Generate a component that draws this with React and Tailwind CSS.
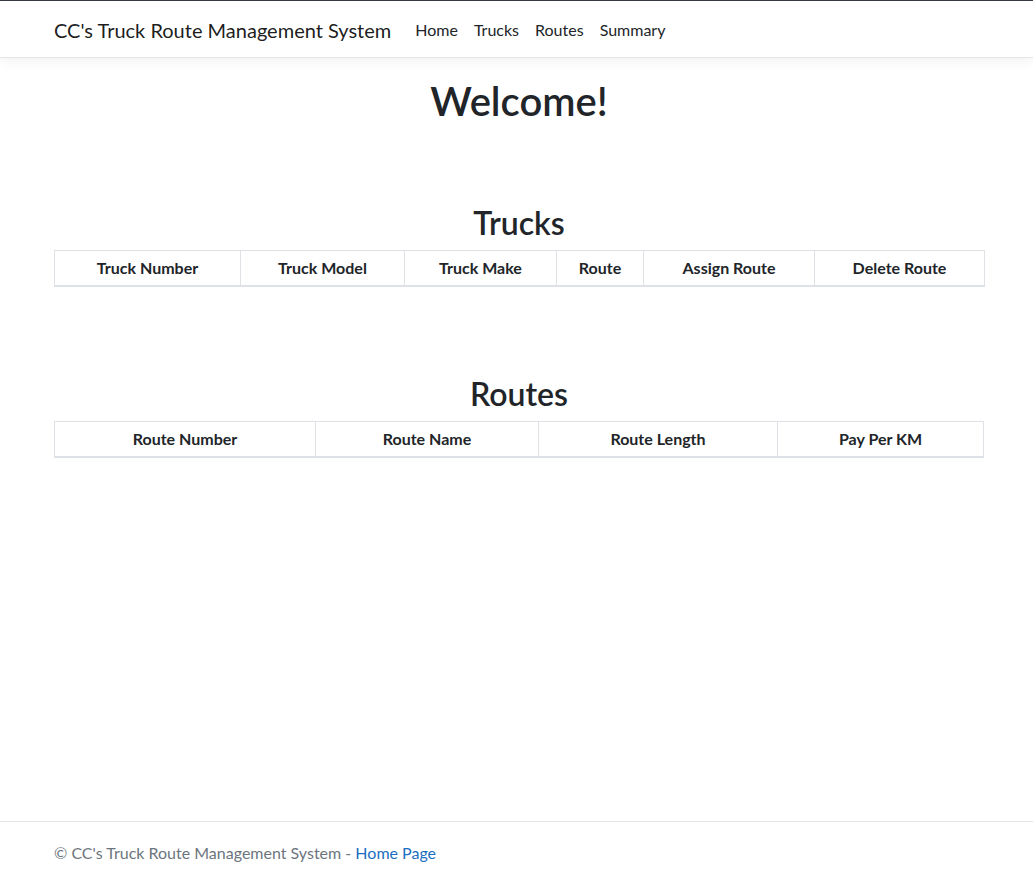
const truckCols = [
  { label: "Truck Number", w: "w-[186px]" },
  { label: "Truck Model", w: "w-[164px]" },
  { label: "Truck Make", w: "w-[152px]" },
  { label: "Route", w: "w-[87px]" },
  { label: "Assign Route", w: "w-[171px]" },
  { label: "Delete Route", w: "w-[170px]" },
];

const routeCols = [
  { label: "Route Number", w: "w-[261px]" },
  { label: "Route Name", w: "w-[223px]" },
  { label: "Route Length", w: "w-[239px]" },
  { label: "Pay Per KM", w: "w-[206px]" },
];

function HeaderTable({ cols }) {
  return (
    <table className="w-[929px] border-collapse table-fixed border border-[#dee2e6]">
      <thead>
        <tr>
          {cols.map((c) => (
            <th
              key={c.label}
              className={`${c.w} border border-[#dee2e6] border-b-2 py-[5px] px-[5px] text-center font-bold leading-6`}
            >
              {c.label}
            </th>
          ))}
        </tr>
      </thead>
    </table>
  );
}

function App() {
  return (
    <div
      className="min-h-screen flex flex-col bg-white text-[#212529] text-base"
      style={{ fontFamily: '"Segoe UI", Lato, "Open Sans", sans-serif' }}
    >
      <header className="border-t border-[#343a40] border-b border-b-[#e5e5e5] bg-white shadow-[0_4px_12px_rgba(0,0,0,0.05)]">
        <nav className="pl-[5px]">
          <div className="mx-auto w-[930px] h-[56px] flex items-center pt-[2px]">
            <a className="text-[20px] leading-[30px] text-[rgba(0,0,0,0.9)] mr-4 whitespace-nowrap">
              CC's Truck Route Management System
            </a>
            <ul className="flex">
              {["Home", "Trucks", "Routes", "Summary"].map((l) => (
                <li key={l}>
                  <a className="block px-2 py-2 text-[#212529] leading-6">{l}</a>
                </li>
              ))}
            </ul>
          </div>
        </nav>
      </header>

      <main className="flex-1 pl-[5px]">
        <div className="mx-auto w-[930px] pt-[19px]">
          <div className="text-center">
            <h1 className="text-[40px] leading-[48px] font-semibold mb-2">Welcome!</h1>
          </div>

          <h2 className="text-center text-[32px] leading-[38px] font-semibold mt-[79px] mb-2">
            Trucks
          </h2>
          <HeaderTable cols={truckCols} />

          <h2 className="text-center text-[32px] leading-[38px] font-semibold mt-[88px] mb-2">
            Routes
          </h2>
          <HeaderTable cols={routeCols} />
        </div>
      </main>

      <footer className="border-t border-[#e5e5e5] h-[56px] pl-[5px] text-[#6c757d]">
        <div className="mx-auto w-[930px] h-full flex items-center pt-[6px] whitespace-nowrap leading-6">
          © CC's Truck Route Management System -&nbsp;
          <a className="text-[#1b6ec2]">Home Page</a>
        </div>
      </footer>
    </div>
  );
}

export default App;
